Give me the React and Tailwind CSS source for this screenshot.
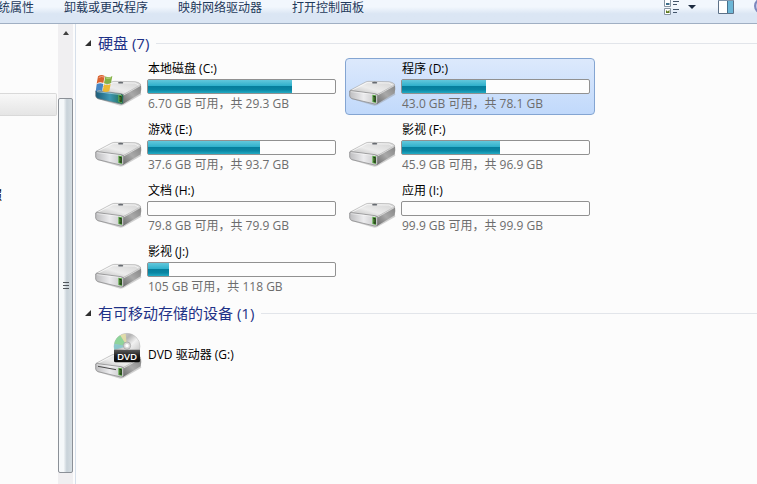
import { useState } from 'react';

const drives = [
  { name: '本地磁盘 (C:)', free: '6.70', total: '29.3', kind: 'system' },
  { name: '程序 (D:)', free: '43.0', total: '78.1' },
  { name: '游戏 (E:)', free: '37.6', total: '93.7' },
  { name: '影视 (F:)', free: '45.9', total: '96.9' },
  { name: '文档 (H:)', free: '79.8', total: '79.9' },
  { name: '应用 (I:)', free: '99.9', total: '99.9' },
  { name: '影视 (J:)', free: '105', total: '118' },
];

const commands = ['统属性', '卸载或更改程序', '映射网络驱动器', '打开控制面板'];

// Gradients shared by all the drive icons
function IconDefs() {
  return (
    <svg width="0" height="0" className="absolute" aria-hidden="true">
      <defs>
        <linearGradient id="lid" x1="0" y1="1" x2="1" y2="0">
          <stop offset="0" stopColor="#b4b4b4" />
          <stop offset="0.45" stopColor="#ececec" />
          <stop offset="1" stopColor="#d2d2d2" />
        </linearGradient>
        <linearGradient id="front" x1="0" y1="0" x2="1" y2="0">
          <stop offset="0" stopColor="#bdbdbf" />
          <stop offset="0.5" stopColor="#ececee" />
          <stop offset="1" stopColor="#c4c4c6" />
        </linearGradient>
        <linearGradient id="frontSystem" x1="0" y1="0" x2="1" y2="0">
          <stop offset="0" stopColor="#1d5c78" />
          <stop offset="0.5" stopColor="#3f98b4" />
          <stop offset="1" stopColor="#1c6a50" />
        </linearGradient>
        <linearGradient id="side" x1="0" y1="1" x2="1" y2="0">
          <stop offset="0" stopColor="#6a6a6a" />
          <stop offset="0.5" stopColor="#a9a9a9" />
          <stop offset="1" stopColor="#858585" />
        </linearGradient>
        <linearGradient id="disc" x1="0" y1="0" x2="1" y2="1">
          <stop offset="0" stopColor="#dcdcdc" />
          <stop offset="0.35" stopColor="#b4b4b4" />
          <stop offset="0.55" stopColor="#f1f1f1" />
          <stop offset="1" stopColor="#b0b0b0" />
        </linearGradient>
        <linearGradient id="badge" x1="0" y1="0" x2="0" y2="1">
          <stop offset="0" stopColor="#5a5a5a" />
          <stop offset="0.5" stopColor="#1e1e1e" />
          <stop offset="1" stopColor="#080808" />
        </linearGradient>
      </defs>
    </svg>
  );
}

function DriveBody({ system }) {
  return (
    <g>
      <path d="M8 108 L76 128 L84 127 L139 95 L136 84 L10 102 Z" fill="#8f8f8f" opacity="0.4" />
      <path d="M82 94 L138 66 Q140 78 137 91 L84 123 Z" fill="url(#side)" />
      <path d="M3 82 L50 57 Q54 55 60 55 L121 56 Q133 58 138 65 L88 93 Q84 96 78 95 L6 87 Z" fill="url(#lid)" stroke="#9a9a9a" strokeWidth="1.5" />
      <path d="M10 81 L54 59 L120 60 L131 66" fill="none" stroke="#ffffff" strokeWidth="2" />
      <ellipse cx="77" cy="59" rx="8" ry="2.5" fill="#666a70" />
      <path d="M2 84 Q3 82 8 83 L78 92 Q86 93 86 99 L85 119 Q84 125 77 123 L9 107 Q3 105 2 99 Z" fill={system ? 'url(#frontSystem)' : 'url(#front)'} stroke="#808082" strokeWidth="2" />
      <path d="M6 86 L78 95" stroke="#ffffff" strokeWidth="2" opacity="0.7" />
      <path d="M86 96 L136 68" stroke="#f2f2f2" strokeWidth="2" />
      <path d="M70 95 L81 97 V120 L70 117 Z" fill="#5fae4a" />
      <path d="M73 98 L80 100 V117 L73 115 Z" fill="#14230f" />
      <path d="M75 101 V113" stroke="#8fe35f" strokeWidth="2" />
    </g>
  );
}

function DriveIcon({ kind }) {
  return (
    <svg viewBox="0 0 144 144" className="size-12 shrink-0" aria-hidden="true">
      {kind === 'dvd' ? (
        <>
          <g transform="translate(0 15)">
            <DriveBody />
            <path d="M9 91 L63 101" stroke="#4a4a4a" strokeWidth="3" />
          </g>
          <circle cx="96" cy="46" r="39" fill="url(#disc)" stroke="#b4b4b4" strokeWidth="1.5" />
          <path d="M96 46 L58 38 Q62 20 76 13 Z" fill="#8ed49a" />
          <path d="M96 46 L58 38 Q56 46 58 56 Z" fill="#7fcbd0" opacity="0.8" />
          <path d="M96 46 L76 13 Q84 8 92 8 Z" fill="#e9e3a2" opacity="0.8" />
          <circle cx="96" cy="44" r="11" fill="#d9d9d9" stroke="#9a9a9a" strokeWidth="2" />
          <circle cx="96" cy="44" r="5" fill="#ffffff" />
          <path d="M57 56 H135 V89 Q135 94 130 94 H62 Q57 94 57 89 Z" fill="url(#badge)" />
          <text x="96" y="86" textAnchor="middle" fontSize="29" fontWeight="600" fontFamily="Open Sans, sans-serif" fill="#ffffff">DVD</text>
        </>
      ) : (
        <DriveBody system={kind === 'system'} />
      )}
      {kind === 'system' && (
        <g>
          <path d="M9 40 Q19 33 29 39 L25 60 Q15 55 5 62 Z" fill="#d9632f" />
          <path d="M31 40 Q41 46 52 39 L48 60 Q37 66 27 61 Z" fill="#83b145" />
          <path d="M5 64 Q15 58 25 63 L21 84 Q11 79 2 86 Z" fill="#4686c4" />
          <path d="M27 64 Q37 69 47 63 L43 84 Q33 90 23 85 Z" fill="#ecb933" />
          <path d="M11 44 Q19 38 27 42" fill="none" stroke="#eea287" strokeWidth="3" />
          <path d="M33 45 Q40 48 48 44" fill="none" stroke="#b9d78c" strokeWidth="3" />
        </g>
      )}
    </svg>
  );
}

function DriveTile({ drive, selected, onSelect }) {
  const used = ((drive.total - drive.free) / drive.total) * 100;
  return (
    <button
      onClick={onSelect}
      className={`flex h-[57px] items-start gap-1 rounded-sm border px-[3px] text-left ${
        selected ? 'border-[#84a5d2] bg-linear-to-b from-[#dce9fc] to-[#c1d9fb]' : 'border-transparent'
      }`}
    >
      <span className="mt-1"><DriveIcon kind={drive.kind} /></span>
      <span className="block min-w-0 flex-1 pr-px">
        <span className="block h-5 pl-px leading-5 text-black">{drive.name}</span>
        <span
          role="meter"
          aria-label={drive.name}
          aria-valuenow={Math.round(used)}
          className="block h-[15px] rounded-xs border border-[#919191] bg-[#fdfdfd]"
        >
          <span
            className="block h-full bg-[linear-gradient(to_bottom,#62c8dc_0%,#2fb0cb_45%,#067e9c_50%,#0a86a3_75%,#22abc4_100%)]"
            style={{ width: `${used}%` }}
          />
        </span>
        <span className="block pl-px leading-5 text-[#6d6d6d]">{drive.free} GB 可用，共 {drive.total} GB</span>
      </span>
    </button>
  );
}

function GroupHeading({ title, count }) {
  return (
    <div className="flex h-[22px] items-center gap-[7px]">
      <svg viewBox="0 0 6 6" className="size-1.5" aria-hidden="true">
        <path d="M6 0 V6 H0 Z" fill="#303030" />
      </svg>
      <h2 className="text-[15px] leading-5 text-[#1e3287]">{title} ({count})</h2>
      <span className="h-px flex-1 bg-[#e2e5ea]" />
    </div>
  );
}

function Toolbar() {
  return (
    <header className="flex h-6 shrink-0 items-start justify-between overflow-hidden border-b border-[#a0afc3] bg-linear-to-b from-[#f2f7fd] from-30% to-[#dbe6f4] to-60%">
      <nav className="-ml-0.5 flex gap-[30px] whitespace-nowrap leading-4 text-[#1e395b]">
        {commands.map(c => (
          <button key={c}>{c}</button>
        ))}
      </nav>
      <div className="-mr-[13px] flex h-4 shrink-0 items-start">
        <button aria-label="更改视图">
          <svg viewBox="0 0 16 16" className="size-4">
            <path d="M0.5 -1 V6.5 H6.5 V-1 M0.5 8.5 H6.5 V14.5 H0.5 Z" fill="#ffffff" stroke="#8795a3" />
            <path d="M2 3 H5.5 V5 H2 Z" fill="#3e6f8c" />
            <path d="M2 10 L3.5 11.5 L5.5 10 V13 H2 Z" fill="#5f7a1e" />
            <path d="M9 1.5 H15 M9 4.5 H13 M9 9.5 H15 M9 12.5 H13" stroke="#43556b" />
          </svg>
        </button>
        <button aria-label="更多选项" className="mt-[5px] ml-2">
          <svg viewBox="0 0 8 4" className="h-1 w-2">
            <path d="M0 0 H8 L4 4 Z" fill="#1c2b40" />
          </svg>
        </button>
        <button aria-label="预览窗格" className="ml-[22px]">
          <svg viewBox="0 0 16 14" className="h-3.5 w-4">
            <path d="M0.5 0 V13.5 H15.5 V0" fill="#ffffff" stroke="#5d7187" />
            <path d="M0 0 H16 V1 H0 Z" fill="#8296ab" />
            <path d="M10 1 H15 V13 H10 Z" fill="#6cb6d6" />
            <path d="M9.5 1 V13" stroke="#46708c" />
          </svg>
        </button>
        <button aria-label="帮助" className="ml-5">
          <svg viewBox="0 0 16 14" className="h-3.5 w-4">
            <circle cx="8" cy="6" r="7" fill="#c3cdee" stroke="#7d88bd" strokeWidth="2" />
          </svg>
        </button>
      </div>
    </header>
  );
}

function Sidebar() {
  return (
    <aside className="flex w-[76px] shrink-0 border-r border-[#d6dfea]">
      <div className="flex-1 overflow-hidden pt-[69px] pr-px">
        <div className="h-[23px] rounded-r-xs border border-l-0 border-[#d9d9d9] bg-linear-to-b from-[#f8f8f8] to-[#e5e5e5]" />
        <div className="-ml-2.5 pt-[72px] leading-4 text-black">照</div>
      </div>
      <div className="mr-0.5 flex w-[15px] flex-col items-center bg-[#f0eff1]">
        <svg viewBox="0 0 6 4" className="mt-[7px] h-1 w-1.5" aria-hidden="true">
          <path d="M3 0 L6 4 H0 Z" fill="#404040" />
        </svg>
        <div className="mt-[63px] mb-[11px] flex w-full flex-1 flex-col items-center justify-center gap-0.5 rounded-xs border border-[#8b9097] bg-linear-to-r from-[#f5f8fa] from-35% via-[#c8d2d9] via-60% to-[#d5dde2]">
          <span className="h-px w-1.5 bg-[#50565c]" />
          <span className="h-px w-1.5 bg-[#50565c]" />
          <span className="h-px w-1.5 bg-[#50565c]" />
        </div>
      </div>
    </aside>
  );
}

export default function App() {
  const [selected, setSelected] = useState('程序 (D:)');

  return (
    <div className="flex h-screen flex-col overflow-hidden bg-[#fcfcfc] font-['Open_Sans','Noto_Sans_CJK_SC',sans-serif] text-xs">
      <IconDefs />
      <Toolbar />
      <div className="flex min-h-0 flex-1">
        <Sidebar />
        <main className="min-w-0 flex-1 overflow-hidden pt-2 pl-[9px]">
          <GroupHeading title="硬盘" count={drives.length} />
          <div className="grid grid-cols-[repeat(auto-fill,250px)] gap-1 pt-1 pl-1.5">
            {drives.map(d => (
              <DriveTile
                key={d.name}
                drive={d}
                selected={d.name === selected}
                onSelect={() => setSelected(d.name)}
              />
            ))}
          </div>
          <div className="pt-1">
            <GroupHeading title="有可移动存储的设备" count={1} />
          </div>
          <div className="pt-0.5 pl-1.5">
            <button className="flex w-[250px] items-center gap-[5px] border border-transparent px-[3px] py-1 text-left">
              <DriveIcon kind="dvd" />
              <span className="text-black">DVD 驱动器 (G:)</span>
            </button>
          </div>
        </main>
      </div>
    </div>
  );
}
